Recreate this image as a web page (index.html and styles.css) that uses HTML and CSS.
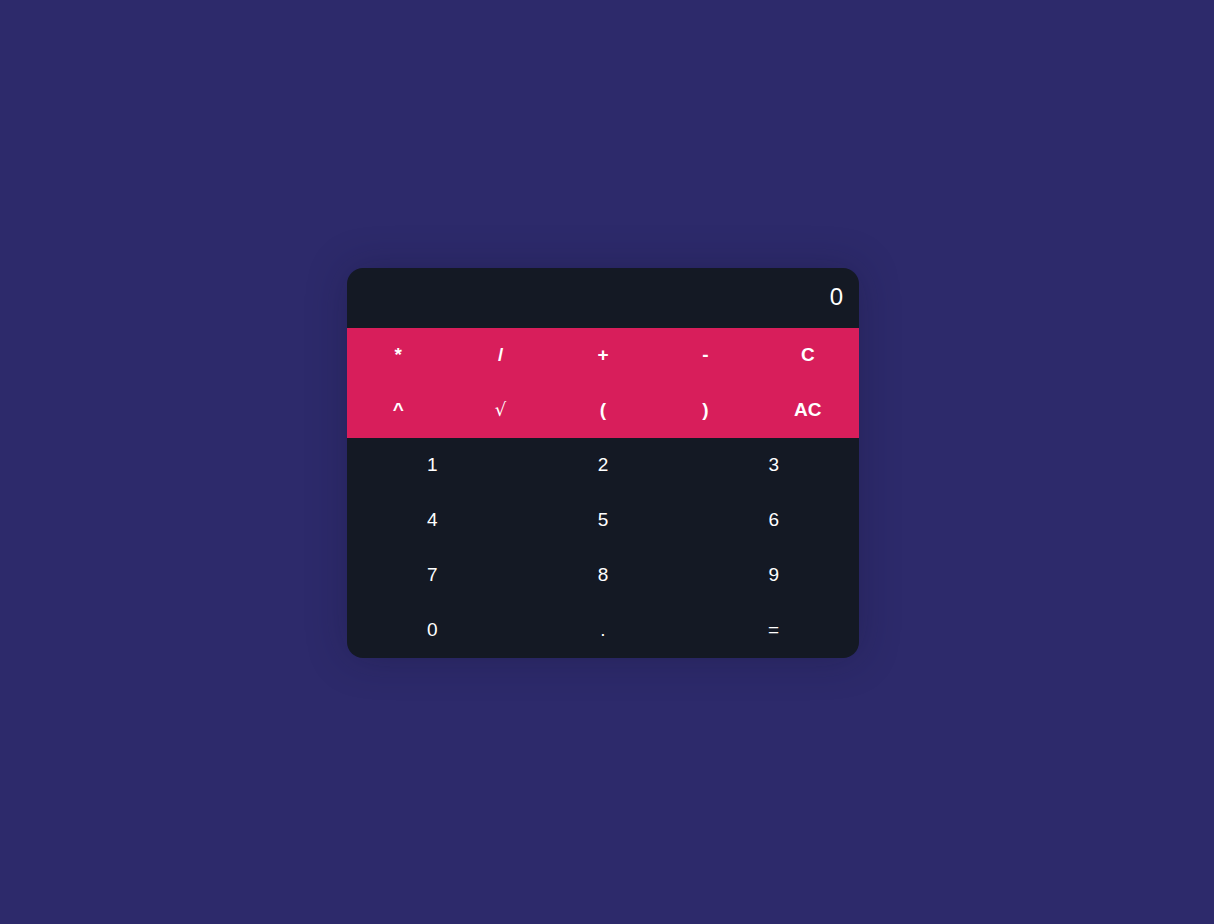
FILE: index.html
```html
<!DOCTYPE html>
<html>
<head>
<meta charset="utf-8">
<title>Calculator</title>
<link rel="stylesheet" href="styles.css">
</head>
<body>
<div class="calc">
  <div class="display">0</div>
  <div class="ops">
    <button class="btn op">*</button>
    <button class="btn op">/</button>
    <button class="btn op">+</button>
    <button class="btn op">-</button>
    <button class="btn op">C</button>
    <button class="btn op">^</button>
    <button class="btn op sqrt">√</button>
    <button class="btn op">(</button>
    <button class="btn op">)</button>
    <button class="btn op">AC</button>
  </div>
  <div class="nums">
    <button class="btn num">1</button>
    <button class="btn num">2</button>
    <button class="btn num">3</button>
    <button class="btn num">4</button>
    <button class="btn num">5</button>
    <button class="btn num">6</button>
    <button class="btn num">7</button>
    <button class="btn num">8</button>
    <button class="btn num">9</button>
    <button class="btn num">0</button>
    <button class="btn num">.</button>
    <button class="btn num">=</button>
  </div>
</div>
</body>
</html>
```
FILE: styles.css
```css
html, body {
  margin: 0;
  height: 100%;
}
body {
  box-sizing: border-box;
  padding: 2px 8px 0 0;
  background: #2d2a6b;
  display: flex;
  align-items: center;
  justify-content: center;
  font-family: "Liberation Sans", Arial, sans-serif;
}
.calc {
  width: 512px;
  background: #141924;
  border-radius: 16px;
  overflow: hidden;
  box-shadow: 0 0 40px rgba(20, 20, 50, 0.3);
}
.display {
  height: 60px;
  box-sizing: border-box;
  padding: 0 16px 2px;
  display: flex;
  align-items: center;
  justify-content: flex-end;
  color: #ffffff;
  font-size: 24px;
}
.ops {
  display: grid;
  grid-template-columns: repeat(5, 1fr);
  background: #d81e5b;
}
.nums {
  display: grid;
  grid-template-columns: repeat(3, 1fr);
}
.btn {
  height: 55px;
  border: none;
  background: transparent;
  color: #ffffff;
  font-family: "Liberation Sans", Arial, sans-serif;
  font-size: 19px;
  padding: 0 0 2px;
  margin: 0;
}
.op {
  font-weight: bold;
  font-size: 19px;
}
.sqrt {
  font-weight: normal;
  font-family: "DejaVu Serif", serif;
  font-size: 18px;
}
```
